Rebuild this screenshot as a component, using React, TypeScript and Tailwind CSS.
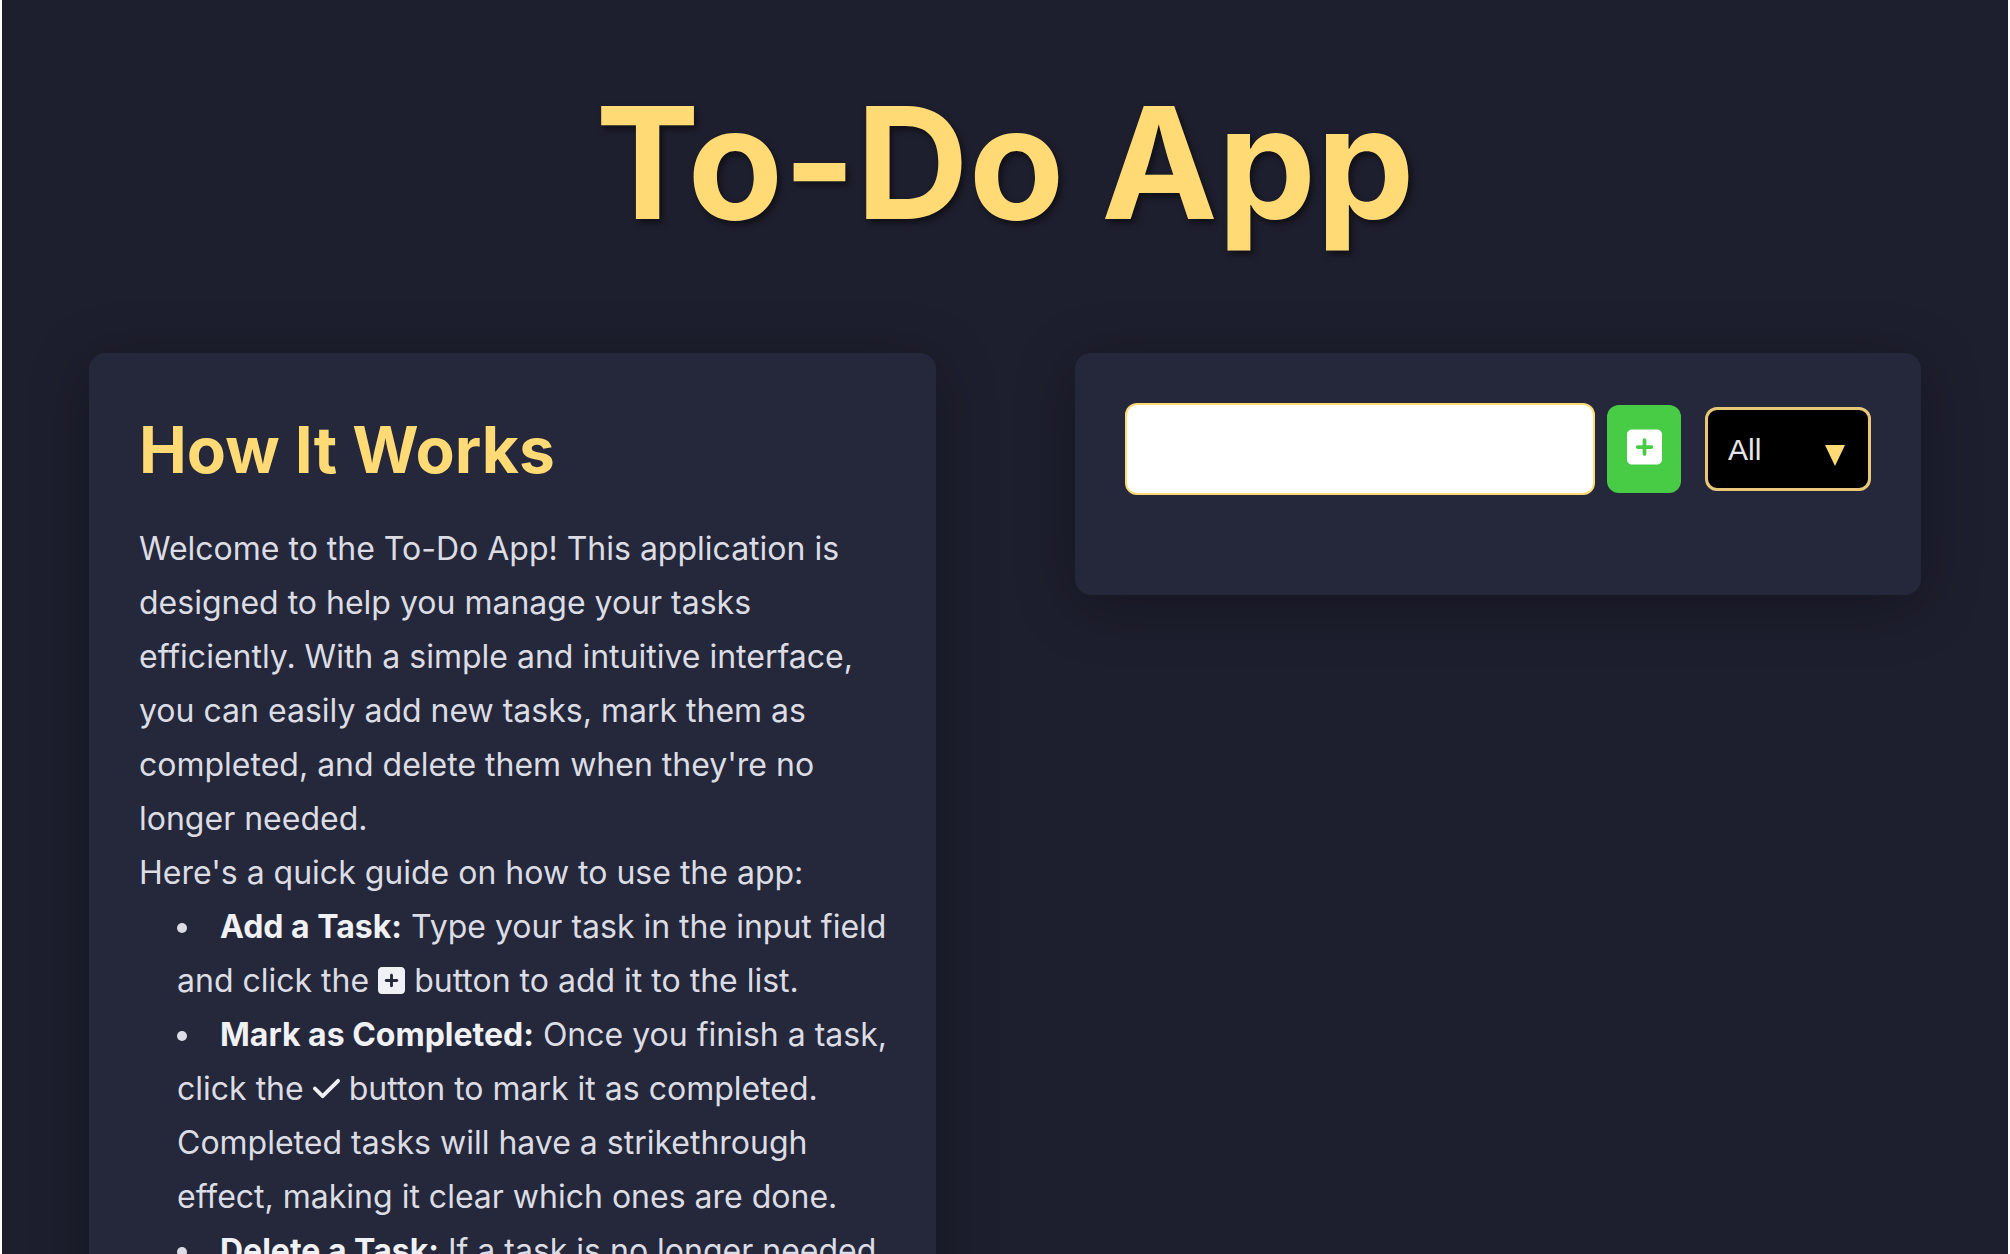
import { useState } from "react";
import type { ReactNode } from "react";
import { FaCheck, FaSquarePlus } from "react-icons/fa6";

function Panel({ children }: { children: ReactNode }) {
  return (
    <section className="min-w-0 rounded-2xl bg-[#25283b] p-[50px] shadow-[0_10px_60px_rgba(0,0,0,0.3)]">
      {children}
    </section>
  );
}

function Guide() {
  return (
    <Panel>
      <h2 className="mb-8 mt-[7px] text-[64px] font-bold leading-[80px] text-[#ffda75]">How It Works</h2>
      <div className="whitespace-nowrap text-[32px] leading-[54px] text-[#dcdde4]">
        <p>
          Welcome to the To-Do App! This application is
          <br />
          designed to help you manage your tasks
          <br />
          efficiently. With a simple and intuitive interface,
          <br />
          you can easily add new tasks, mark them as
          <br />
          completed, and delete them when they're no
          <br />
          longer needed.
        </p>
        <p>Here's a quick guide on how to use the app:</p>
        <ul className="list-inside list-disc pl-[38px]">
          <li>
            <strong className="font-bold text-[#f0f1f5]">Add a Task:</strong> Type your task in the input field
            <br />
            and click the <FaSquarePlus className="inline h-[31px] w-[27px] align-[-4px] text-[#f0f1f5]" /> button to
            add it to the list.
          </li>
          <li>
            <strong className="font-bold text-[#f0f1f5]">Mark as Completed:</strong> Once you finish a task,
            <br />
            click the <FaCheck className="inline h-[31px] w-[27px] align-[-4px] text-[#f0f1f5]" /> button to mark it as
            completed.
            <br />
            Completed tasks will have a strikethrough
            <br />
            effect, making it clear which ones are done.
          </li>
          <li>
            <strong className="font-bold text-[#f0f1f5]">Delete a Task:</strong> If a task is no longer needed
          </li>
        </ul>
      </div>
    </Panel>
  );
}

function Tasks() {
  const [text, setText] = useState("");
  const [filter, setFilter] = useState("All");
  return (
    <Panel>
      <form className="mb-[50px] flex items-center" onSubmit={(e) => e.preventDefault()}>
        <input
          type="text"
          aria-label="New task"
          value={text}
          onChange={(e) => setText(e.target.value)}
          className="h-[92px] min-w-0 flex-1 rounded-xl border-2 border-[#ffda75] bg-white px-6 text-[28px] text-black outline-none"
        />
        <button
          type="submit"
          aria-label="Add task"
          className="ml-3 flex h-[88px] w-[74px] items-center justify-center rounded-xl bg-[#48cc45] pb-1 text-white"
        >
          <FaSquarePlus className="h-[40px] w-[35px]" />
        </button>
        <div className="relative ml-6">
          <select
            aria-label="Filter tasks"
            value={filter}
            onChange={(e) => setFilter(e.target.value)}
            className="h-[84px] w-[166px] appearance-none rounded-xl border-3 border-[#e6c878] bg-black px-5 font-['Liberation_Sans',sans-serif] text-[30px] text-[#e6e6ea] outline-none"
          >
            <option>All</option>
            <option>Completed</option>
            <option>Uncompleted</option>
          </select>
          <svg
            viewBox="0 0 20 21"
            aria-hidden="true"
            className="pointer-events-none absolute right-[26px] top-[38px] h-[21px] w-[20px] fill-[#ffda75]"
          >
            <path d="M0 0h20L10 21z" />
          </svg>
        </div>
      </form>
    </Panel>
  );
}

export default function App() {
  return (
    <div className="h-screen overflow-hidden border-x-2 border-white bg-[#1e1f2e] font-['Inter',sans-serif]">
      <header className="pb-20 pt-[53px] text-center">
        <h1 className="text-[156px] font-bold leading-[220px] text-[#ffda75] [text-shadow:3px_4px_6px_rgba(0,0,0,0.5)]">
          To-Do App
        </h1>
      </header>
      <main className="grid grid-cols-2 items-start gap-[139px] px-[87px]">
        <Guide />
        <Tasks />
      </main>
    </div>
  );
}
